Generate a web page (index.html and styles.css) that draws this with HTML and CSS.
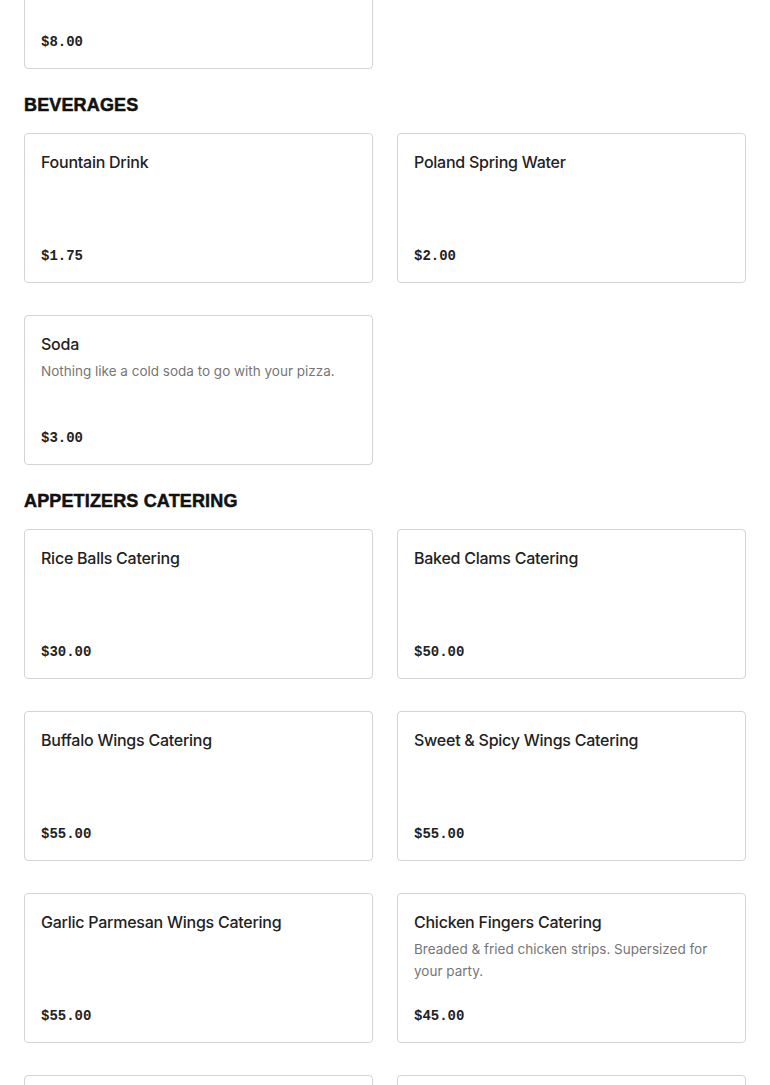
FILE: index.html
```html
<!DOCTYPE html>
<html>
<head>
<meta charset="utf-8">
<link rel="stylesheet" href="styles.css">
</head>
<body>
<main class="menu">
  <div class="grid first">
    <div class="card"><div class="info"></div><div class="price">$8.00</div></div>
  </div>

  <h2 class="section-title">BEVERAGES</h2>
  <div class="grid">
    <div class="card"><div class="info"><div class="name">Fountain Drink</div></div><div class="price">$1.75</div></div>
    <div class="card"><div class="info"><div class="name">Poland Spring Water</div></div><div class="price">$2.00</div></div>
    <div class="card"><div class="info"><div class="name">Soda</div><div class="desc">Nothing like a cold soda to go with your pizza.</div></div><div class="price">$3.00</div></div>
  </div>

  <h2 class="section-title">APPETIZERS CATERING</h2>
  <div class="grid">
    <div class="card"><div class="info"><div class="name">Rice Balls Catering</div></div><div class="price">$30.00</div></div>
    <div class="card"><div class="info"><div class="name">Baked Clams Catering</div></div><div class="price">$50.00</div></div>
    <div class="card"><div class="info"><div class="name">Buffalo Wings Catering</div></div><div class="price">$55.00</div></div>
    <div class="card"><div class="info"><div class="name">Sweet &amp; Spicy Wings Catering</div></div><div class="price">$55.00</div></div>
    <div class="card"><div class="info"><div class="name">Garlic Parmesan Wings Catering</div></div><div class="price">$55.00</div></div>
    <div class="card"><div class="info"><div class="name">Chicken Fingers Catering</div><div class="desc">Breaded &amp; fried chicken strips. Supersized for your party.</div></div><div class="price">$45.00</div></div>
    <div class="card"><div class="info"><div class="name">&nbsp;</div></div><div class="price">&nbsp;</div></div>
    <div class="card"><div class="info"><div class="name">&nbsp;</div></div><div class="price">&nbsp;</div></div>
  </div>
</main>
</body>
</html>
```

FILE: styles.css
```css
html, body {
  margin: 0;
  padding: 0;
  background: #ffffff;
  overflow: hidden;
}

.menu {
  padding: 0 24px;
  margin-top: -81px;
  font-family: Inter, "Noto Sans", sans-serif;
  color: #222222;
}

.grid {
  display: grid;
  grid-template-columns: 1fr 1fr;
  column-gap: 24px;
  row-gap: 32px;
}

.card {
  box-sizing: border-box;
  height: 150px;
  border: 1px solid #d4d4d4;
  border-radius: 4px;
  padding: 16px 16px 14px 16px;
  display: flex;
  flex-direction: column;
  justify-content: space-between;
  background: #fff;
}

.name {
  font-size: 16px;
  line-height: 24px;
  font-weight: 500;
  color: #222222;
  letter-spacing: -0.25px;
}

.desc {
  margin-top: 4px;
  font-size: 13.5px;
  line-height: 22px;
  color: #767676;
  letter-spacing: 0;
}

.price {
  font-family: "Liberation Mono", "DejaVu Sans Mono", monospace;
  font-size: 14px;
  line-height: 24px;
  font-weight: 700;
  color: #222222;
}

.section-title {
  margin: 24px 0 16px 0;
  font-family: "Liberation Sans", Arial, sans-serif;
  font-weight: 900;
  font-size: 18px;
  line-height: 24px;
  color: #111111;
  letter-spacing: 0.15px;
  -webkit-text-stroke: 0.5px #111111;
}
```
